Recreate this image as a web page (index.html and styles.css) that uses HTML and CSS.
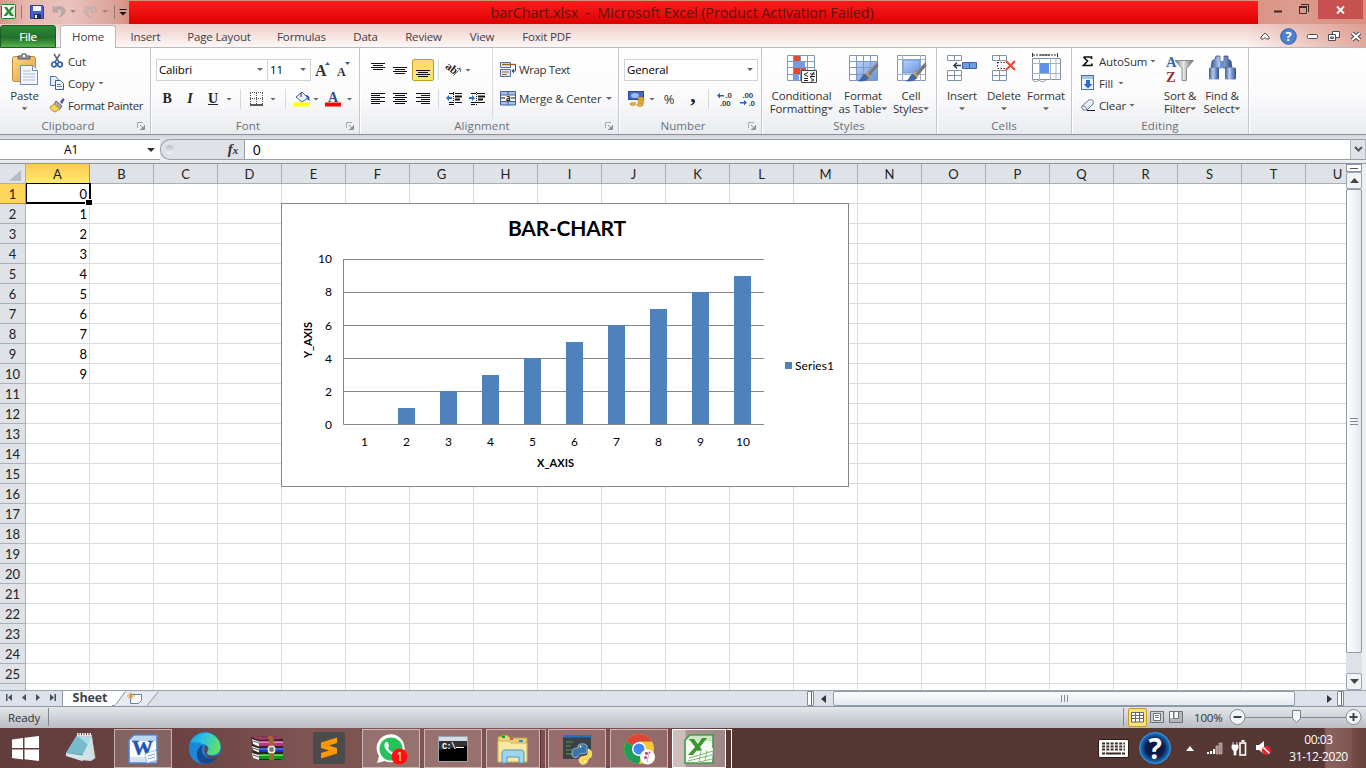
FILE: index.html
```html
<!DOCTYPE html>
<html lang="en">
<head>
<meta charset="utf-8">
<title>barChart.xlsx - Microsoft Excel</title>
<link rel="stylesheet" href="styles.css">
</head>
<body>
<svg class="defs" width="0" height="0">
  <defs>
    <linearGradient id="gBlue" x1="0" y1="0" x2="1" y2="1"><stop offset="0" stop-color="#b9d2fa"/><stop offset="1" stop-color="#6a94e2"/></linearGradient>
    <linearGradient id="gSteel" x1="0" y1="0" x2="1" y2="0"><stop offset="0" stop-color="#3c5a96"/><stop offset=".4" stop-color="#b4caf0"/><stop offset="1" stop-color="#2f4c88"/></linearGradient>
    <linearGradient id="gFunnel" x1="0" y1="0" x2="1" y2="0"><stop offset="0" stop-color="#777"/><stop offset=".45" stop-color="#e8e8e8"/><stop offset="1" stop-color="#666"/></linearGradient>
    <linearGradient id="gGold" x1="0" y1="0" x2="1" y2="1"><stop offset="0" stop-color="#fbd98c"/><stop offset="1" stop-color="#dfa03c"/></linearGradient>
    <linearGradient id="gEdge" x1="0" y1="0" x2="1" y2=".3"><stop offset="0" stop-color="#1c9be0"/><stop offset=".5" stop-color="#2fc2df"/><stop offset="1" stop-color="#5fe06a"/></linearGradient>
    <radialGradient id="gHelp"><stop offset="0" stop-color="#0b1030"/><stop offset=".6" stop-color="#0d1f52"/><stop offset="1" stop-color="#1c82d2"/></radialGradient>
    <symbol id="launch" viewBox="0 0 8 8"><path d="M.5 6V.5H6" fill="none" stroke="#a2a7b0"/><path d="M3 3l3 3M7.500 3v4.500H3" fill="none" stroke="#8b9099"/><path d="M7 4v3H4z" fill="#8b9099"/></symbol>
    <symbol id="brush" viewBox="0 0 20 20"><path d="M19 0l1 4-9 10-3-3z" fill="#77777b"/><path d="M19 0l-9 10-2 1 1 1z" fill="#c8c8cc"/><path d="M8 10l4 4-2 3-4-4z" fill="#c99655"/><path d="M6 12l4 4c-2 3-6 3-10 3 3-1 3-5 6-7z" fill="#3b6bb5" stroke="#274d8c" stroke-width=".6"/></symbol>
  </defs>
</svg>

<header class="titlebar">
  <div class="qat">
    <svg class="q-xl" width="16" height="16"><rect x=".5" y=".5" width="14" height="14" rx="1" fill="#fff" stroke="#2e7d32"/><path d="M10 1h4v13h-4z" fill="#d8ecd2"/><path d="M3 3h3l2 3 2-3h3L9.500 7.500 13 12h-3.500L7.500 9.500 5.500 12H2.500L6 7.500z" fill="#2e8b35"/></svg>
    <i class="q-sep"></i>
    <svg class="q-save" width="14" height="14"><path d="M.5.5h12l1 1v12H.5z" fill="#4662c8" stroke="#2b3f9c"/><path d="M3 1h8v5H3z" fill="#f4f6fc"/><path d="M4 9h7v5H4z" fill="#1f2c63"/><path d="M5 10h2v3H5z" fill="#fff"/></svg>
    <svg class="q-undo" width="14" height="13"><path d="M1 1v6h5.500L4 5c3-2 6-1 6 2 0 2-1 3-3 5 3-1 6-3 6-6 0-4-6-6-10-3z" fill="#b9aaaa" stroke="#a59696" stroke-width=".6"/></svg>
    <i class="dd pale"></i>
    <svg class="q-redo" width="14" height="13"><path d="M13 1v6H7.500L10 5C7 3 4 4 4 7c0 2 1 3 3 5C4 11 1 9 1 6c0-4 6-6 10-3z" fill="#cdb9b7" stroke="#b1a09f" stroke-width=".6"/></svg>
    <i class="dd pale"></i>
    <i class="q-sep q-sep2"></i>
    <svg width="8" height="8"><path d="M.5 1.500h7" stroke="#111"/><path d="M.5 4h7L4 7.500z" fill="#111"/></svg>
  </div>
  <div class="redbar"><span>barChart.xlsx&nbsp; -&nbsp; Microsoft Excel (Product Activation Failed)</span></div>
  <div class="winbtns">
    <svg width="35" height="19"><path d="M15 11.500h8" stroke="#3a2a28" stroke-width="2"/></svg>
    <svg width="24" height="19"><path d="M5.500 6.500h7v7h-7z" fill="none" stroke="#3a2a28"/><path d="M5 7h8" stroke="#3a2a28" stroke-width="2"/><path d="M7 4.500h7.500V12" fill="none" stroke="#3a2a28"/></svg>
    <div class="close"><svg width="9" height="8"><path d="M1 .5l7 7M8 .5l-7 7" stroke="#fff" stroke-width="1.800"/></svg></div>
  </div>
</header>

<nav class="tabs">
  <div class="tab file">File</div>
  <div class="tab home">Home</div>
  <div class="tab w-ins">Insert</div>
  <div class="tab w-pl">Page Layout</div>
  <div class="tab w-fo">Formulas</div>
  <div class="tab w-da">Data</div>
  <div class="tab w-re">Review</div>
  <div class="tab w-vi">View</div>
  <div class="tab w-fx">Foxit PDF</div>
  <div class="tabtools">
    <svg width="10" height="9"><path d="M1 5l4-4 4 4v2H6.500L5 5.500 3.500 7H1z" fill="#fff" stroke="#4b4b55"/></svg>
    <svg width="17" height="17"><circle cx="8.500" cy="8.500" r="7.800" fill="#4a82d4" stroke="#2c5ca8"/><text x="8.500" y="13.200" text-anchor="middle" class="i-help">?</text></svg>
    <svg width="11" height="6"><rect x=".5" y="1.500" width="10" height="4" rx="1" fill="#fff" stroke="#4b4b55"/></svg>
    <svg width="12" height="12"><path d="M4.500 1.500h7v6h-7z" fill="#fff" stroke="#4b4b55"/><path d="M.5 4.500h7v6h-7z" fill="#fff" stroke="#4b4b55"/><path d="M2.500 7h3v1.500h-3z" fill="#fff" stroke="#4b4b55"/></svg>
    <svg width="12" height="11"><path d="M2 2l8 7M10 2L2 9" stroke="#4b4b55" stroke-width="4"/><path d="M2 2l8 7M10 2L2 9" stroke="#fff" stroke-width="1.800"/></svg>
  </div>
</nav>

<section class="ribbon">
  <div class="group g-clip">
    <div class="gbody">
      <div class="big b-paste">
        <svg width="28" height="32"><rect x="2.500" y="3.500" width="23" height="25" rx="2" fill="url(#gGold)" stroke="#c58a34"/><path d="M8 6V3h3c0-3 6-3 6 0h3v3z" fill="#8d9096" stroke="#5b5e66"/><circle cx="14" cy="3" r="1.200" fill="#fff"/><path d="M10.500 12.500h12l5 5v14h-17z" fill="#f3f7fd" stroke="#7288ad"/><path d="M22.500 12.500v5h5" fill="#fff" stroke="#7288ad"/><path d="M13 18h8M13 21h12M13 24h12M13 27h12" stroke="#a9bcd8"/></svg>
        <span>Paste</span><span class="l2"><i class="dd"></i></span>
      </div>
      <div class="col3 c-clip">
        <div><svg width="16" height="14"><path d="M5 0l5 8M11 0L6 8" stroke="#5a6275" stroke-width="1.500"/><circle cx="5" cy="10.500" r="2.300" fill="none" stroke="#3464ad" stroke-width="1.700"/><circle cx="11" cy="10.500" r="2.300" fill="none" stroke="#3464ad" stroke-width="1.700"/></svg><span>Cut</span></div>
        <div><svg width="16" height="14"><path d="M1.500.5h5l3 3v6h-8z" fill="#e5eefb" stroke="#4a6fae"/><path d="M6.500 4.500h5l3 3v6h-8z" fill="#f4f8ff" stroke="#365c9e"/><path d="M8 8.500h4M8 10.500h5" stroke="#5e82c0"/></svg><span class="cp">Copy</span><i class="dd"></i></div>
        <div><svg width="16" height="14"><path d="M11 4l3-4 1.500 1.500L13 6z" fill="#5a4a9c"/><path d="M7 3l6 5-2 3-6-4z" fill="#a9a9b3" stroke="#666"/><path d="M5 6l6 5-5 3C3 13 1 11 1 9z" fill="#f4d35e" stroke="#b8922c"/></svg><span class="fp">Format Painter</span></div>
      </div>
    </div>
    <div class="glabel"><span>Clipboard</span><svg width="8" height="8"><use href="#launch"/></svg></div>
  </div>

  <div class="group g-font">
    <div class="gbody rows2">
      <div class="row r-f1">
        <div class="combo"><span>Calibri</span><i class="dd"></i></div>
        <div class="combo c2"><span>11</span><i class="dd"></i></div>
        <svg width="16" height="16"><text x="0" y="14" class="i-serif s17">A</text><path d="M10 3h5l-2.500-3z" fill="#2f5fb3"/></svg>
        <svg width="14" height="16"><text x="0" y="14" class="i-serif s12">A</text><path d="M8 0h5l-2.500 3z" fill="#2f5fb3"/></svg>
      </div>
      <div class="row r-f2">
        <b class="fmt">B</b><b class="fmt it">I</b><b class="fmt un">U</b><i class="dd"></i><i class="sep"></i>
        <svg width="14" height="14"><path d="M.5 1v11M6.500 1v11M12.500 1v11M0 .5h13M0 6.500h13" stroke="#555" stroke-dasharray="1 1"/><path d="M0 13h13" stroke="#000" stroke-width="1.300"/></svg>
        <i class="dd"></i><i class="sep"></i>
        <svg width="17" height="16"><path d="M2 6l6-5 6 6-6 4z" fill="#e9f0fa" stroke="#44608f"/><path d="M7 6V1.500" stroke="#333"/><path d="M12 4c3 0 4 3 3.500 6L13 8z" fill="#2f5fb3"/><path d="M0 11.500h16v4H0z" fill="#ff0"/></svg>
        <i class="dd"></i>
        <svg width="16" height="16"><text x="8" y="10.500" text-anchor="middle" class="i-serif s14 navy">A</text><path d="M0 11.500h16v4H0z" fill="red"/></svg>
        <i class="dd"></i>
      </div>
    </div>
    <div class="glabel"><span>Font</span><svg width="8" height="8"><use href="#launch"/></svg></div>
  </div>

  <div class="group g-align">
    <div class="gbody">
      <div class="rows2 al-left">
        <div class="row r-a1">
          <svg width="14" height="14"><path d="M0 .5h14M2 2.500h10M0 4.500h14M2 6.500h10" stroke="#111"/></svg>
          <svg width="14" height="14"><path d="M0 4.500h14M2 6.500h10M0 8.500h14M2 10.500h10" stroke="#111"/></svg>
          <div class="on"><svg width="14" height="14"><path d="M0 7.500h14M2 9.500h10M0 11.500h14M2 13.500h10" stroke="#111"/></svg></div>
          <i class="sep"></i>
          <svg width="16" height="14"><text x="-1" y="8" transform="rotate(38 4 6)" class="i-ab">ab</text><path d="M7 13l7-7M11 5.500h3.500V9" stroke="#777" fill="none"/></svg>
          <i class="dd"></i>
        </div>
        <div class="row r-a2">
          <svg width="14" height="12"><path d="M0 .5h14M0 2.500h9M0 4.500h14M0 6.500h9M0 8.500h14M0 10.500h9" stroke="#111"/></svg>
          <svg width="14" height="12"><path d="M0 .5h14M2 2.500h10M0 4.500h14M2 6.500h10M0 8.500h14M2 10.500h10" stroke="#111"/></svg>
          <svg width="14" height="12"><path d="M0 .5h14M5 2.500h9M0 4.500h14M5 6.500h9M0 8.500h14M5 10.500h9" stroke="#111"/></svg>
          <i class="sep"></i>
          <svg width="16" height="14"><path d="M3 1.500h5M9 1.500h7M3 10.500h5M9 10.500h7M3 12.500h4" stroke="#111"/><path d="M9 4.500h7M9 7.500h5" stroke="#111" stroke-width="1.800"/><path d="M7.500 0v14" stroke="#111" stroke-dasharray="1 1"/><path d="M0 6l3-3v2h3v2H3v2z" fill="#2f6bd0"/></svg>
          <svg width="16" height="14"><path d="M2 1.500h5M8 1.500h8M2 10.500h5M8 10.500h8M2 12.500h4" stroke="#111"/><path d="M9 4.500h7M9 7.500h5" stroke="#111" stroke-width="1.800"/><path d="M7.500 0v14" stroke="#111" stroke-dasharray="1 1"/><path d="M6 6L3 3v2H0v2h3v2z" fill="#2f6bd0"/></svg>
        </div>
      </div>
      <div class="rows2 al-right">
        <div class="row r-w"><svg width="17" height="15"><path d="M.5.5h10v5H.5zM.5 7.500h10v7H.5z" fill="#dfe9f8" stroke="#52709f"/><path d="M2 2.500h14" stroke="#a0602c" stroke-width="1.400"/><path d="M2 10h7M2 12.500h5" stroke="#a0602c"/><path d="M15.500 3v6h-3" stroke="#2c4c80" fill="none"/><path d="M14 6.500v5L11.500 9z" fill="#2c4c80"/></svg><span class="wt">Wrap Text</span></div>
        <div class="row r-w"><svg width="17" height="15"><path d="M.5.5h15v13.500H.5z" fill="#a9c1e6" stroke="#3f5f95"/><path d="M1 4h14v6H1z" fill="#fff"/><path d="M0 4h16M0 10.500h16M8 0v4M8 10.500V14" stroke="#3f5f95"/><path d="M1 7h4M11 7h4" stroke="#111"/><text x="8" y="9.500" text-anchor="middle" class="i-a">a</text></svg><span class="mc">Merge &amp; Center</span><i class="dd"></i></div>
      </div>
    </div>
    <div class="glabel"><span>Alignment</span><svg width="8" height="8"><use href="#launch"/></svg></div>
  </div>

  <div class="group g-num">
    <div class="gbody rows2">
      <div class="row r-n1"><div class="combo"><span>General</span><i class="dd"></i></div></div>
      <div class="row r-n2">
        <svg width="17" height="16"><rect x=".5" y=".5" width="15" height="8" fill="#3f6cc0" stroke="#284c94"/><ellipse cx="7" cy="4.500" rx="4" ry="2.500" fill="#9fbcf0"/><g fill="#f2b93b" stroke="#a87414" stroke-width=".6"><ellipse cx="13" cy="7.500" rx="3" ry="1.400"/><ellipse cx="13" cy="9.500" rx="3" ry="1.400"/><ellipse cx="13" cy="11.500" rx="3" ry="1.400"/><ellipse cx="5" cy="13" rx="3" ry="1.400"/><ellipse cx="12" cy="14" rx="3" ry="1.400"/></g></svg>
        <i class="dd"></i><span class="pct">%</span><b class="comma">,</b><i class="sep"></i>
        <svg width="16" height="14"><text x="8.500" y="6" class="i-dec">.0</text><text x="3" y="14" class="i-dec">.00</text><path d="M0 3.500L3 1v2h4v1.500H3v2z" fill="#2f5fc0"/></svg>
        <svg width="16" height="14"><text x="2.500" y="6" class="i-dec">.00</text><text x="8.500" y="14" class="i-dec">.0</text><path d="M7 10.500L4 8v2H0v1.500h4v2z" fill="#2f5fc0"/></svg>
      </div>
    </div>
    <div class="glabel"><span>Number</span><svg width="8" height="8"><use href="#launch"/></svg></div>
  </div>

  <div class="group g-sty">
    <div class="gbody">
      <div class="big b-cond">
        <svg width="32" height="32"><path d="M2.500 2.500h27v25h-27z" fill="#fff" stroke="#7f98bd"/><path d="M9 3h7v6H9zM9 15h12v6H9z" fill="#e2492f"/><path d="M9 9h11v6H9zM9 21h5v6H9z" fill="#6f9df0"/><path d="M2 8.500h28M2 14.500h28M2 21.500h28M8.500 2v26M15.500 2v26M22.500 2v26" stroke="#7f98bd"/><path d="M16.500 17.500h15v12h-15z" fill="#fff" stroke="#444"/><path d="M23 19.500l-4 2 4 2M19 25.500h4M19 27.500h4M25 21h5M25 23.500h5M29 19l-3.500 6M26 25.500l3 1.500-3 1.500" fill="none" stroke="#222"/></svg>
        <span>Conditional</span><span class="l2">Formatting<i class="dd"></i></span>
      </div>
      <div class="big b-cell">
        <svg width="32" height="32"><path d="M2.500 2.500h28v25h-28z" fill="#fff" stroke="#7f98bd"/><path d="M9 9h21v18H9z" fill="url(#gBlue)"/><path d="M2 8.500h28M2 14.500h28M2 21.500h28M9.500 2v26M16.500 2v26M23.500 2v26" stroke="#7f98bd"/><use href="#brush" x="11" y="9" width="21" height="20"/></svg>
        <span>Format</span><span class="l2">as Table<i class="dd"></i></span>
      </div>
      <div class="big b-cell">
        <svg width="32" height="32"><path d="M2.500 2.500h28v25h-28z" fill="#fff" stroke="#7f98bd"/><path d="M2 6.500h28M2 21.500h28M7.500 2v26M25.500 2v26" stroke="#9fb3d0"/><path d="M8 7h17v13H8z" fill="url(#gBlue)" stroke="#6a94d8"/><use href="#brush" x="11" y="9" width="21" height="20"/></svg>
        <span>Cell</span><span class="l2">Styles<i class="dd"></i></span>
      </div>
    </div>
    <div class="glabel nol"><span>Styles</span></div>
  </div>

  <div class="group g-cells">
    <div class="gbody">
      <div class="big b-c">
        <svg width="32" height="32"><path d="M1.500 2.500h14v5h-14zM1.500 17.500h14v10h-14zM1.500 22.500h14M8.500 2.500v5M8.500 17.500v10" fill="#fff" stroke="#7f91ab"/><path d="M16.500 9.500h14v6h-14z" fill="#6d9be8" stroke="#3e62a0"/><path d="M23.500 9v7" stroke="#3e62a0"/><path d="M8 12.500h7M11 9.500l-3 3 3 3" stroke="#333e55" stroke-width="1.500" fill="none"/></svg>
        <span>Insert</span><span class="l2"><i class="dd"></i></span>
      </div>
      <div class="big b-c">
        <svg width="32" height="32"><path d="M4.500 2.500h14v5h-14zM4.500 17.500h14v10h-14zM4.500 22.500h14M11.500 2.500v5M11.500 17.500v10" fill="#fff" stroke="#7f91ab"/><path d="M9.500 9.500h8M9.500 15.500h8M9.500 9v6" stroke="#333" stroke-dasharray="1.500 1.500"/><path d="M18 8l9 9M27 8l-9 9" stroke="#f0442c" stroke-width="2"/></svg>
        <span>Delete</span><span class="l2"><i class="dd"></i></span>
      </div>
      <div class="big b-c">
        <svg width="32" height="32"><path d="M2.500 5.500h28v21h-28z" fill="#fff" stroke="#7f91ab"/><path d="M2 10.500h28M2 20.500h28M9.500 5v22M20.500 5v22M26 5v22" stroke="#a5b3c9"/><path d="M10 10h9v10h-9z" fill="#5f92ea"/><path d="M2.500 0v4M27.500 0v4M10 2h10" stroke="#333" fill="none"/><path d="M3 2h24" stroke="#333" stroke-dasharray="2 1"/><path d="M3 27c0 2 5 2 6 0 1 2 6 2 7 0" fill="#fff" stroke="#7f91ab"/></svg>
        <span>Format</span><span class="l2"><i class="dd"></i></span>
      </div>
    </div>
    <div class="glabel nol"><span>Cells</span></div>
  </div>

  <div class="group g-edit">
    <div class="gbody">
      <div class="col3 c-edit">
        <div><svg width="14" height="14"><path d="M2.500 3h8v2M2.500 3l4 4-4 4.500h8.300v-2" fill="none" stroke="#111" stroke-width="1.700"/></svg><span class="as">AutoSum</span><i class="dd"></i></div>
        <div><svg width="14" height="16"><rect x=".5" y=".5" width="12" height="14" fill="#eef4fd" stroke="#4a6fae"/><path d="M1 1h11v3H1z" fill="#a9c3ec"/><path d="M5 5h4v4h2.500L7 13.500 2.500 9H5z" fill="#2f6bd8"/></svg><span class="fi">Fill</span><i class="dd"></i></div>
        <div><svg width="14" height="14"><path d="M1 8l7-6c4-1 5 1 4 4l-6 6H3c-2-1-3-3-2-4z" fill="#e8f0fc" stroke="#6a7ea3"/><path d="M1 8c3 0 5 1 5 4" fill="none" stroke="#6a7ea3"/><path d="M6 12.500h8" stroke="#111"/></svg><span class="cl">Clear</span><i class="dd"></i></div>
      </div>
      <div class="big b-c">
        <svg width="32" height="32"><path d="M11 7.500h18.500l-7 8v12h-4.500v-12z" fill="url(#gFunnel)" stroke="#777" stroke-width=".8"/><text x="2" y="14" class="i-az blueA">A</text><text x="2" y="29" class="i-az redZ">Z</text></svg>
        <span>Sort &amp;</span><span class="l2">Filter<i class="dd"></i></span>
      </div>
      <div class="big b-c">
        <svg width="32" height="32"><path d="M10 3h4v4l1 2v6H5l1-7 3-2zM18 3h4v3l3 2 1 7H17V9l1-2z" fill="url(#gSteel)" stroke="#2d4a80" stroke-width=".7"/><path d="M14 8h4v7h-4z" fill="#6d8fcc"/><rect x="3" y="14.500" width="10" height="12" rx="1.500" fill="url(#gSteel)"/><rect x="19" y="14.500" width="11" height="12" rx="1.500" fill="url(#gSteel)"/></svg>
        <span>Find &amp;</span><span class="l2">Select<i class="dd"></i></span>
      </div>
    </div>
    <div class="glabel nol"><span>Editing</span></div>
  </div>
</section>

<section class="formula">
  <div class="namebox"><span>A1</span><svg width="8" height="4"><path d="M0 0h8L4 4z" fill="#333"/></svg></div>
  <div class="fxpart"><i class="knob"></i><em>f<small>x</small></em></div>
  <div class="fval">0</div>
  <div class="fexp"><svg width="9" height="7"><path d="M1 1l3.500 3.500L8 1" fill="none" stroke="#555" stroke-width="2"/></svg></div>
</section>

<main class="sheet">
  <div class="rowheads">
    <div class="corner"><svg width="12" height="11"><path d="M12 0v11H0z" fill="#b6bcc4"/></svg></div>
    <span class="sel">1</span><span>2</span><span>3</span><span>4</span><span>5</span><span>6</span><span>7</span><span>8</span><span>9</span><span>10</span><span>11</span><span>12</span><span>13</span><span>14</span><span>15</span><span>16</span><span>17</span><span>18</span><span>19</span><span>20</span><span>21</span><span>22</span><span>23</span><span>24</span><span>25</span><span></span>
  </div>
  <div class="main">
    <div class="colheads"><span class="sel">A</span><span>B</span><span>C</span><span>D</span><span>E</span><span>F</span><span>G</span><span>H</span><span>I</span><span>J</span><span>K</span><span>L</span><span>M</span><span>N</span><span>O</span><span>P</span><span>Q</span><span>R</span><span>S</span><span>T</span><span>U</span></div>
    <div class="cells">
      <div class="colA"><span>0</span><span>1</span><span>2</span><span>3</span><span>4</span><span>5</span><span>6</span><span>7</span><span>8</span><span>9</span></div>
      <div class="cursor"></div>
      <svg class="chart" width="568" height="284">
        <rect x=".5" y=".5" width="567" height="283" fill="#fff" stroke="#868686"/>
        <text x="227" y="33" textLength="118" class="ct">BAR-CHART</text>
        <path d="M62 56.500h421M62 89.500h421M62 122.500h421M62 155.500h421M62 188.500h421" stroke="#868686"/>
        <g fill="#4f81bd"><path d="M117 205h17v16h-17zM159 188h17v33h-17zM201 172h17v49h-17zM243 155h17v66h-17zM285 139h17v82h-17zM327 122h17v99h-17zM369 106h17v115h-17zM411 89h17v132h-17zM453 73h17v148h-17z"/><path d="M504 159h7v7h-7z"/></g>
        <path d="M62.500 56v165.500H483" fill="none" stroke="#868686"/>
        <g class="cl12" text-anchor="end"><text x="51" y="60">10</text><text x="51" y="93">8</text><text x="51" y="127">6</text><text x="51" y="160">4</text><text x="51" y="193">2</text><text x="51" y="226">0</text></g>
        <g class="cl12" text-anchor="middle"><text x="83.500" y="243">1</text><text x="125.500" y="243">2</text><text x="167.500" y="243">3</text><text x="209.500" y="243">4</text><text x="251.500" y="243">5</text><text x="293.500" y="243">6</text><text x="335.500" y="243">7</text><text x="377.500" y="243">8</text><text x="419.500" y="243">9</text><text x="462" y="243">10</text></g>
        <text x="514" y="167" textLength="39" class="cl12">Series1</text>
        <text x="256" y="264" textLength="37" class="ca">X_AXIS</text>
        <text x="0" y="0" textLength="36" transform="translate(30.500 155) rotate(-90)" class="ca">Y_AXIS</text>
      </svg>
    </div>
  </div>
  <div class="vscroll">
    <div class="vsplit"><i></i></div>
    <div class="vbtn"><svg width="9" height="5"><path d="M4.500 0L9 5H0z" fill="#444"/></svg></div>
    <div class="vthumb"><i></i><i></i><i></i></div>
    <div class="vtrack"></div>
    <div class="vbtn"><svg width="9" height="5"><path d="M0 0h9L4.500 5z" fill="#444"/></svg></div>
  </div>
</main>

<div class="tabstrip">
  <svg class="nav" width="63" height="15"><g fill="#4a4f57"><path d="M6 3h1.500v7H6zM12 3v7L8 6.500zM26 3v7l-4-3.500zM36 3v7l4-3.500zM50 3v7l4-3.500zM54.500 3H56v7h-1.500z"/></g><path d="M62.500 0v16" stroke="#8c97a8"/></svg>
  <div class="stab">Sheet</div>
  <svg class="newtab" width="48" height="15"><path d="M-5 0H8L-2 14h-3z" fill="#fff"/><path d="M-1.500 14L9.500 .5H41.500L30 14.500z" fill="#e8ebf0"/><path d="M-5 14.500h3L8.500.5M30 14.500L41.500 .5" fill="none" stroke="#8c97a8"/><path d="M13.500 3.500h11v6l-3 3h-8z" fill="#fff" stroke="#5d7fba"/><path d="M14 1v8M10 5h8M11.500 2.500l5 5M16.500 2.500l-5 5" stroke="#d99a35"/></svg>
  <div class="grow"></div>
  <div class="hsplit"></div>
  <div class="hl"><svg width="5" height="8"><path d="M5 0v8L0 4z" fill="#333"/></svg></div>
  <div class="hthumb"><i></i><i></i><i></i></div>
  <div class="hr"><svg width="5" height="8"><path d="M0 0v8l5-4z" fill="#333"/></svg></div>
  <div class="hsplit"></div>
  <div class="hend"></div>
</div>

<footer class="status">
  <span class="ready">Ready</span><i class="ssep"></i>
  <div class="grow"></div>
  <i class="ssep"></i>
  <div class="vw on2"><svg width="13" height="11"><path d="M.5.500h12v9.500H.5zM.5 3.500h12M.5 6.500h12M4.500.5V10M8.500.5V10" fill="#fff" stroke="#666"/></svg></div>
  <div class="vw"><svg width="14" height="12"><path d="M.5.5h13v11H.5z" fill="#c9cdd1" stroke="#6f7378"/><path d="M3.500 2.500h7v7h-7z" fill="#fff" stroke="#6f7378"/><path d="M5 4.500h4M5 6.500h4" stroke="#777"/></svg></div>
  <div class="vw"><svg width="14" height="12"><path d="M.5.5h13v11H.5z" fill="#b5b9be" stroke="#6f7378"/><path d="M1 1h3v6H1zM6 1h3v6H6z" fill="#fff"/><path d="M4.500 0v7.500H9.500V0" fill="none" stroke="#6f7378"/></svg></div>
  <span class="zoom">100%</span>
  <svg class="slider" width="137" height="20"><path d="M16 10.500h104" stroke="#7d858f"/><circle cx="8.500" cy="10" r="7.500" fill="#f4f5f6" stroke="#858b93"/><path d="M4.500 10h8" stroke="#444" stroke-width="2"/><path d="M63.500 3.500h8v8l-4 4-4-4z" fill="#f6f7f8" stroke="#777e88"/><circle cx="124.500" cy="10" r="7.500" fill="#f4f5f6" stroke="#858b93"/><path d="M120.500 10h8M124.500 6v8" stroke="#444" stroke-width="2"/></svg>
</footer>

<div class="taskbar">
  <div class="start"><svg width="27" height="25"><path d="M0 3.500l11-1.500v10H0zM12.500 1.800L27 0v12H12.500zM0 13.500h11v10L0 22zM12.500 13.500H27V25l-14.500-1.800z" fill="#fff"/></svg></div>
  <div class="slot"><svg width="32" height="32"><path d="M26 4l5 22-3 2-5-3z" fill="#8f7a3a"/><path d="M12 3h15l-5 20L1 21z" fill="#a8dce6"/><path d="M12 3l-6 10-5 8c6 1 9 2 12 3l9-1 2-9z" fill="#4fa3b8" opacity=".55"/><path d="M27 4l3 22-4 3-11-1z" fill="#cfe0e6"/><path d="M1 21l14 2 9 1-7 5-16-5z" fill="#d5e6ea"/><path d="M12 3h15v2H12z" fill="#c3c9cc"/><path d="M12 2.500h15" stroke="#eef2f3" stroke-width="3" stroke-dasharray="1.500 1"/></svg></div>
  <div class="slot open"><svg width="32" height="32"><path d="M7 2h23v28H2V7z" fill="#fff" stroke="#4f82cb" stroke-width="1.600"/><path d="M4 7l4-4h21v5H4z" fill="#bcd5f3"/><path d="M3 24h26v5H3z" fill="#d3e3f7"/><text x="15.500" y="22" text-anchor="middle" textLength="21" lengthAdjust="spacingAndGlyphs" class="i-word">W</text><path d="M18 21l11-4 1 10-10 3z" fill="#fff" stroke="#9dbbe3"/><path d="M21 23l7-2M21 26l7-2" stroke="#7ba1d6"/></svg></div>
  <div class="slot"><svg width="32" height="32"><circle cx="16" cy="16" r="16" fill="#1a7fd6"/><path d="M1 11C4 1 22-5 30 9c4 8 0 14-8 14-4 0-5-2-3-4 2-3-1-7-6-7-5-1-9-2-12-1z" fill="url(#gEdge)"/><path d="M0 17c0-6 8-8 13-5-5 5-5 14 2 20C6 32 0 25 0 17z" fill="#1c87da"/><path d="M14 13c-5 9 5 17 15 12-4 6-11 8-17 6C5 25 8 15 14 13z" fill="#16498f"/><path d="M17 13c4 3 0 6 1 9 3 3 8 3 13 0-1 2-2 3-3 4-5 2-11-1-12-5-1-3-1-6 1-8z" fill="#653f3f"/></svg></div>
  <div class="slot"><svg width="32" height="32"><path d="M0 5l24-1 8 3v20l-4 1H8l-6-2z" fill="#33211f"/><path d="M0 5l24-1 8 3-24 1z" fill="#9b3a68"/><path d="M1 7l7 2.500v5L2 12zM1 14l7 2.500v4L2 18zM1 21l7 2v5l-6-2z" fill="#f4f2f2"/><path d="M2 9l6 2M2 16l6 2M2 23l6 2" stroke="#666"/><path d="M8 9h24v5H8z" fill="#b03a7c"/><path d="M8 9.500h24v1.500H8z" fill="#e08abb"/><path d="M8 16h24v4H8z" fill="#1634d0"/><path d="M8 16.500h24v1H8z" fill="#6c8cf4"/><path d="M8 22h24v5H8z" fill="#0c9a1c"/><path d="M8 22.500h24V24H8z" fill="#5be05e"/><path d="M17 4l4 0 2 5v19h-5V9z" fill="#a5672a"/><rect x="17.500" y="14.500" width="6" height="6" rx="2" fill="#777" stroke="#f0ead2" stroke-width="1.700"/></svg></div>
  <div class="slot"><svg width="32" height="32"><rect width="32" height="32" rx="2" fill="#4b4b4b"/><path d="M8 10.500L24 5.500v5.500L16 13.500l8 2.500v5.500L8 26.500V21l8-2.500L8 16z" fill="#ff9800"/></svg></div>
  <div class="slot open"><svg width="32" height="32"><path d="M2 30l2-7a14 14 0 1 1 6 5z" fill="#fff"/><circle cx="16" cy="16" r="11.500" fill="#25c35c"/><path d="M11 9c2-1 3 4 3 4l-1 2c1 2 3 4 5 4l2-2 4 2c0 4-5 4-8 2-5-3-9-9-5-12z" fill="#fff"/><circle cx="24.500" cy="23.500" r="8" fill="#f11"/><text x="24.500" y="28" text-anchor="middle" class="i-one">1</text></svg></div>
  <div class="slot open"><svg width="30" height="26"><rect x=".5" y=".5" width="29" height="25" fill="#000" stroke="#9aa3ab"/><path d="M1 1h28v4H1z" fill="#d5dde4"/><path d="M1 5h28v5L1 14z" fill="#333"/><text x="4" y="12.500" class="i-cmd">C:\</text><path d="M18 11.500h8" stroke="#fff"/></svg></div>
  <div class="slot open stack"><svg width="32" height="30"><path d="M1 3l9-2 3 3h17v22H1z" fill="#e9d27f" stroke="#bd9c3f"/><path d="M5 2h3v2H5z" fill="#0c9a1c"/><path d="M13 4h3v2h-3z" fill="#e0512c"/><path d="M22 6h4v2h-4z" fill="#2c88d8"/><path d="M1 7h11l2 2h16v19H1z" fill="#f8e8a2" stroke="#ceb057"/><path d="M5 29V19c0-2 1-3 3-3h16c2 0 3 1 3 3v10h-5v-6H10v6z" fill="#9fd4ee" stroke="#4e9ac5"/></svg></div>
  <div class="slot open"><svg width="32" height="32"><path d="M2 2h28v24H2z" fill="#3c4145"/><path d="M2 2h28v2.500H2z" fill="#1c72c4"/><path d="M5 9h7M5 13h5M5 17h6M5 21h9" stroke="#4aa04a"/><path d="M17 13c0-3 9-3 9 0v6c0 3-9 0-9 5-5 2-6-1-6-4 0-4 2-5 6-5z" fill="#3a76ab" stroke="#fff" stroke-width=".5"/><path d="M27 16c5 0 5 10 0 10 0 7-9 7-9 1 0-6 9-2 9-7z" fill="#ffd749" stroke="#fff" stroke-width=".5"/><circle cx="19.500" cy="13.500" r="1" fill="#fff"/><circle cx="24" cy="28.500" r="1" fill="#fff"/></svg></div>
  <div class="slot open"><svg width="32" height="32"><circle cx="16" cy="16" r="15" fill="#f9c935"/><path d="M16 16L3 8.500A15 15 0 0 1 29 8.500H16z" fill="#dc4437"/><path d="M16 16L3 8.500A15 15 0 0 0 15.500 31l6-11z" fill="#1f9d58"/><circle cx="16" cy="16" r="7" fill="#fff"/><circle cx="16" cy="16" r="5.500" fill="#4285f4"/><circle cx="24.500" cy="24" r="7.500" fill="#fff"/><circle cx="23.500" cy="20.500" r="1.400" fill="#a0305a"/><circle cx="26.500" cy="19.500" r="1" fill="#c04a7c"/><circle cx="22.500" cy="24.500" r="1.600" fill="#c04a7c"/><path d="M26 20l-2 9" stroke="#d9a0b8"/></svg></div>
  <div class="slot open stack act"><svg width="32" height="32"><path d="M7 2h23v28H2V7z" fill="#f5fbf3" stroke="#3f9a45" stroke-width="1.600"/><path d="M4 7l4-4h21v5H4z" fill="#c9e8c2"/><path d="M6 6h5l4 5 4-6h5l-7 9 6 9h-5l-4-6-4 5H5l7-8z" fill="#3b9632"/><path d="M15 18l15-3-1 12-15 3z" fill="#fff"/><path d="M6 25l24-7M5 28l24-6M12 30l17-4M18 18l-2 11M24 17l-2 11" stroke="#7db672"/></svg></div>
  <div class="grow"></div>
  <svg class="kb" width="31" height="19"><rect x=".5" y=".5" width="30" height="18" rx="1.500" fill="#fff" stroke="#2b1a18"/><path d="M4 4.500h23M4 7.500h23M4 10.500h23" stroke="#3b2b29" stroke-width="2" stroke-dasharray="3 1.300"/><path d="M8 14.500h15M4 14.500h3M24 14.500h3" stroke="#3b2b29" stroke-width="2"/></svg>
  <svg class="qh" width="32" height="32"><circle cx="16" cy="16" r="15.500" fill="url(#gHelp)" stroke="#2f9be8"/><text x="16" y="26.500" text-anchor="middle" class="i-big">?</text></svg>
  <svg class="up" width="8" height="5"><path d="M4 0l4 5H0z" fill="#fff"/></svg>
  <svg class="sig" width="16" height="13"><path d="M0 10h2v2H0zM3 9h2v3H3zM6 7h2v5H6z" fill="#fff"/><path d="M9 4h2v8H9zM12 1h3v11h-3z" fill="#9c8886" stroke="#d8cdcb" stroke-width=".6"/></svg>
  <svg class="bat" width="15" height="16"><path d="M1 2v3M5 2v3M0 5h6v3c0 2-2 2-2 3v4H2v-4c0-1-2-1-2-3z" stroke="#fff" fill="#fff" stroke-width=".8"/><rect x="8" y="3" width="5.500" height="12" fill="none" stroke="#fff" stroke-width="1.600"/><path d="M9.500 1h3" stroke="#fff" stroke-width="2"/></svg>
  <svg class="vol" width="16" height="16"><path d="M0 5h3l5-4v13l-5-4H0z" fill="#fff"/><circle cx="10.500" cy="10.500" r="4.500" fill="#e8202a"/><path d="M7.500 7.500l6 6" stroke="#fff" stroke-width="1.500"/></svg>
  <div class="clock"><span>00:03</span><span>31-12-2020</span></div>
</div>
</body>
</html>
```
FILE: styles.css
```css
* { box-sizing: border-box; }
body { margin: 0; width: 1366px; height: 768px; overflow: hidden; display: flex; flex-direction: column; font-family: "Open Sans", "Noto Sans", sans-serif; font-size: 11.5px; letter-spacing: -0.15px; color: #333; background: #dce0e8; }
body > * { flex: none; }
svg { display: block; flex: none; overflow: visible; }
.defs { position: absolute; }
.grow { flex: 1; }
span, div { white-space: nowrap; }

/* title bar */
.titlebar { height: 24px; display: flex; background: linear-gradient(90deg, #d99386 0, #e6b7af 25px, #e9c3bd 70px, #dda69b 110px, #d88f80 130px, #d88f80 1240px, #dc9c8f 1290px, #d99080 1366px); }
.qat { width: 129px; display: flex; align-items: center; padding-left: 1px; padding-bottom: 1px; }
.q-sep { width: 1px; height: 14px; background: #8d7a79; margin-left: 4px; }
.q-save { margin-left: 8px; }
.q-undo { margin-left: 8px; }
.q-undo + .dd { margin-left: 4px; }
.q-redo { margin-left: 7px; }
.q-redo + .dd { margin-left: 5px; }
.q-sep2 { margin-left: 6px; margin-right: 4px; }
.redbar { width: 1129px; height: 23px; margin-top: 1px; background: linear-gradient(#fd1c1c, #ee0f0f 50%, #dc0000); color: #61150f; font-size: 14.5px; letter-spacing: -0.13px; text-align: center; line-height: 23px; padding-right: 23px; }
.winbtns { display: flex; padding-left: 1px; }
.close { width: 45px; height: 19px; background: #c75050; display: flex; align-items: center; justify-content: center; }

/* tabs */
.tabs { height: 24px; display: flex; padding-top: 1px; background: linear-gradient(90deg, rgba(216,143,128,0) 0, rgba(216,143,128,0) 1245px, rgba(216,143,128,.75) 1366px), linear-gradient(#f0cec8, #fdf7f6); border-bottom: 1px solid #b5babf; }
.tab { text-align: center; line-height: 23px; height: 23px; color: #40404a; }
.file { width: 56px; background: linear-gradient(#2c8a37, #22702b 55%, #55b24a); border: 1px solid #1b5e22; border-radius: 3px 3px 0 0; color: #fff; line-height: 22px; -webkit-text-stroke: .2px #fff; }
.home { width: 56px; height: 24px; margin-left: 4px; margin-right: 3px; background: #fff; border: 1px solid #b5babf; border-bottom: 0; border-radius: 3px 3px 0 0; line-height: 21px; }
.w-ins { width: 53px; } .w-pl { width: 94px; } .w-fo { width: 71px; } .w-da { width: 57px; } .w-re { width: 59px; } .w-vi { width: 58px; } .w-fx { width: 71px; }
.tabtools { flex: 1; display: flex; justify-content: flex-end; align-items: center; gap: 10px; padding-right: 4px; padding-bottom: 0; }

/* ribbon */
.ribbon { height: 87px; display: flex; background: linear-gradient(#fff, #fbfbfc 55%, #e9ebee); border-bottom: 1px solid #8b9097; }
.group { display: flex; flex-direction: column; border-right: 1px solid #c3c8cf; box-shadow: 1px 0 #fff; }
.g-clip { width: 151px; } .g-font { width: 209px; } .g-align { width: 259px; } .g-num { width: 143px; } .g-sty { width: 175px; } .g-cells { width: 135px; } .g-edit { width: 177px; }
.gbody { height: 70px; display: flex; }
.glabel { height: 16px; display: flex; align-items: center; padding: 0 5px 1px 5px; color: #6a7080; }
.glabel span { flex: 1; text-align: center; padding-right: 6px; letter-spacing: .1px; }
.glabel.nol span { padding: 0; }
.dd { width: 6px; height: 3px; background: #666; clip-path: polygon(0 0, 100% 0, 50% 100%); flex: none; }
.dd.pale { background: #9c8583; }
.big { display: flex; flex-direction: column; align-items: center; padding-top: 5px; }
.big > svg { margin-bottom: 5px; height: 32px; margin-right: 1px; }
.big > span { height: 12.5px; line-height: 12.5px; }
.big .l2 { display: flex; align-items: center; }
.l2 .dd { margin-left: 3px; }
.l2 .dd:only-child { margin-left: 0; }
.b-paste { width: 49px; }
.b-cond { width: 75px; margin-left: 2px; }
.b-cell { width: 48px; }
.b-c { width: 42px; }
.g-cells .gbody { padding-left: 4px; }
.col3 { padding-top: 2px; display: flex; flex-direction: column; }
.col3 > div { height: 22px; display: flex; align-items: center; }
.c-clip svg { margin-right: 3px; }
.cp { width: 30px; }
.fp { letter-spacing: -.36px; }
.wt { letter-spacing: -.4px; }
.c-edit { width: 87px; padding-left: 9px; }
.c-edit svg { margin-right: 4px; }
.as { width: 51px; } .fi { width: 19px; } .cl { width: 30px; }
.rows2 { display: flex; flex-direction: column; padding-top: 11px; gap: 7px; }
.gbody .rows2 { flex: none; }
.row { height: 22px; display: grid; align-items: center; justify-items: center; justify-content: start; }
.g-font .row, .g-num .row { padding-left: 5px; }
.r-f1 { grid-template-columns: 112px 43px 24px 18px; }
.r-f2 { grid-template-columns: 22px 24px 22px 10px 12px 22px 10px 15px 18px 10px 24px 9px; }
.al-left { width: 132px; padding-left: 6px; }
.r-a1 { grid-template-columns: 23px 22px 24px 7px 23px 6px; }
.r-a2 { grid-template-columns: 23px 22px 24px 7px 24px 22px; }
.al-right { padding-left: 7px; border-left: 1px solid #d8dbe0; }
.r-w { display: flex; padding-bottom: 1px; }
.r-w svg { margin-right: 2px; }
.mc { width: 87px; }
.r-n1 { grid-template-columns: 134px; }
.r-n2 { grid-template-columns: 24px 8px 26px 22px 9px 24px 21px; }
.combo { width: 100%; height: 22px; background: #fff; border: 1px solid #cfd3d8; display: flex; align-items: center; justify-content: space-between; padding: 0 4px 1px 2px; color: #000; }
.c2 { border-left: 0; }
.sep { width: 1px; height: 20px; background: #d5d8dd; }
.on { width: 22px; height: 22px; border: 1px solid #c29b29; border-radius: 2px; background: linear-gradient(#ffd86c, #fee27e); display: flex; align-items: center; justify-content: center; }
.fmt { font: bold 14px "Liberation Serif", serif; color: #222; }
.it { font-style: italic; } .un { text-decoration: underline; }
.pct { font-size: 13px; }
.comma { font: bold 22px/10px "Liberation Serif", serif; padding-bottom: 8px; color: #222; }

/* text inside icons */
.i-serif { font-family: "Liberation Serif", serif; font-weight: bold; fill: #333; letter-spacing: 0; }
.s17 { font-size: 16px; } .s12 { font-size: 12px; } .s14 { font-size: 14px; }
.navy { fill: #2f4f8f; }
.i-az { font: bold 14.5px "Liberation Serif", serif; letter-spacing: 0; }
.blueA { fill: #3564b5; } .redZ { fill: #9b3030; }
.i-help { font: bold 13px "Open Sans", sans-serif; fill: #fff; }
.i-ab { font: bold 11.5px "Liberation Serif", serif; fill: #222; }
.i-a { font: bold 8px "Open Sans", sans-serif; fill: #111; }
.i-dec { font: bold 8px "Liberation Sans", sans-serif; fill: #444; letter-spacing: -.2px; }
.i-word { font: bold 21px "Liberation Serif", serif; fill: #1c55b4; letter-spacing: 0; stroke: #1c55b4; stroke-width: .5px; }
.i-one { font: 12px "Open Sans", sans-serif; fill: #fff; }
.i-cmd { font: bold 8.5px "Liberation Mono", monospace; fill: #fff; letter-spacing: -.6px; }
.i-big { font: bold 28px "Open Sans", sans-serif; fill: #fff; }

/* formula bar */
.formula { height: 29px; padding: 4px 0 4px; display: flex; background: linear-gradient(#d0d4db, #dfe2e7 4px, #eceef1 25px, #e5e7eb); border-bottom: 1px solid #90959c; }
.formula > div { height: 21px; border-top: 1px solid #989da5; border-bottom: 1px solid #989da5; }
.namebox { width: 160px; background: #fff; display: flex; align-items: center; color: #000; font-size: 12px; padding-left: 64px; justify-content: space-between; padding-right: 5px; }
.fxpart { width: 84px; background: #dee1e6; border-left: 1px solid #989da5; border-radius: 10px 0 0 10px; display: flex; align-items: center; justify-content: space-between; padding: 0 6px 0 4px; }
.knob { width: 9px; height: 9px; border-radius: 50%; background: linear-gradient(#b9bdc3, #f3f4f6); }
.fxpart em { font: italic bold 15px/18px "Liberation Serif", serif; color: #333; }
.fxpart small { font-size: 11px; }
.fval { flex: 1; background: #fff; border-left: 1px solid #989da5; font: 13px/20px Lato, sans-serif; color: #000; padding-left: 8px; }
.fexp { width: 16px; border: 1px solid #b5babf; background: #dee1e6; display: flex; align-items: center; justify-content: center; }

/* worksheet */
.sheet { height: 526px; display: flex; font: 13px Lato, sans-serif; letter-spacing: 0; overflow: hidden; }
.rowheads { width: 26px; display: flex; flex-direction: column; background: #dfe2e7; color: #222; }
.corner { height: 20px; flex: none; border-right: 1px solid #a9afb7; border-bottom: 1px solid #a9afb7; padding: 6px 0 0 9px; }
.rowheads span { height: 20px; flex: none; border-bottom: 1px solid #a9afb7; border-right: 1px solid #a9afb7; text-align: center; line-height: 20px; }
.rowheads .sel { background: #ffd65c; border-color: #c08a2e; }
.main { width: 1320px; overflow: hidden; }
.colheads { height: 20px; display: flex; background: #dfe2e7; color: #222; }
.colheads span { width: 64px; flex: none; text-align: center; line-height: 20px; border-right: 1px solid #a9afb7; border-bottom: 1px solid #a9afb7; }
.colheads .sel { background: linear-gradient(#fdca55, #ffe96a); border-color: #c08a2e; }
.cells { height: 506px; position: relative; background: linear-gradient(90deg, transparent 63px, #d9dadc 63px) 0 0 / 64px 20px, linear-gradient(transparent 19px, #d9dadc 19px) 0 0 / 64px 20px, #fff; }
.colA { width: 61px; display: flex; flex-direction: column; color: #000; }
.colA span { height: 20px; line-height: 21px; text-align: right; }
.cursor { position: absolute; left: 0; top: -1px; width: 65px; height: 21px; border: 1px solid #000; border-right-width: 2px; border-bottom-width: 2px; }
.cursor::after { content: ""; position: absolute; right: -3px; bottom: -3px; width: 6px; height: 5px; background: #000; border-left: 1px solid #fff; border-top: 1px solid #fff; }
.chart { position: absolute; left: 255px; top: 19px; }
.ct { font: bold 21px Lato, sans-serif; }
.cl12 { font: 12px Lato, sans-serif; }
.ca { font: bold 11px Lato, sans-serif; }
.vscroll { width: 20px; background: #dde1e8; border-right: 4px solid #eceef2; display: flex; flex-direction: column; }
.vsplit { height: 8px; border: 1px solid #8b95a5; background: #fff; padding: 3px 3px 0; }
.vsplit i { display: block; height: 1px; background: #555; }
.vbtn { height: 17px; border: 1px solid #9aa5b5; border-radius: 2px; background: #f1f3f6; display: flex; align-items: center; justify-content: center; }
.vthumb { height: 464px; border: 1px solid #8f9aab; border-radius: 2px; background: linear-gradient(90deg, #fff, #e4e8ee); display: flex; flex-direction: column; align-items: center; justify-content: center; gap: 2px; }
.vthumb i { width: 8px; height: 1px; background: #828a97; }
.vtrack { flex: 1; }

/* sheet tabs */
.tabstrip { height: 17px; display: flex; align-items: stretch; background: #dde1e9; border-top: 1px solid #9aa2ad; border-bottom: 1px solid #8b95a5; }
.stab { width: 54px; background: #fff; font: bold 12.5px/14px "Open Sans", sans-serif; text-align: center; color: #3d434c; letter-spacing: -.1px; }
.hsplit { width: 7px; border: 1px solid #7f8999; border-radius: 1px; background: linear-gradient(90deg, #fff 3px, #666 3px, #666 4px, #fff 4px); }
.hl { width: 19px; display: flex; align-items: center; justify-content: center; }
.hthumb { width: 462px; border: 1px solid #8f9aab; border-radius: 2px; background: linear-gradient(#fdfdfe, #e4e8ee); display: flex; align-items: center; justify-content: center; gap: 2px; }
.hthumb i { width: 1px; height: 7px; background: #828a97; }
.hr { width: 42px; display: flex; align-items: center; justify-content: flex-end; padding-right: 5px; }
.hend { width: 22px; }

/* status bar */
.status { height: 21px; display: flex; align-items: center; padding-bottom: 1px; background: linear-gradient(#e3e6e9, #cfd2d6 50%, #b9bdc2); color: #333; }
.ready { width: 48px; padding-left: 8px; }
.ssep { width: 1px; height: 18px; background: #82878d; }
.status .ssep + .vw { margin-left: 4px; }
.vw { width: 19px; height: 19px; display: flex; align-items: center; justify-content: center; }
.on2 { border: 1px solid #c29b29; border-radius: 2px; background: #ffe07a; }
.zoom { margin-left: 9px; width: 35px; }

/* taskbar */
.taskbar { height: 40px; display: flex; align-items: center; background: linear-gradient(90deg, #613d3c, #6b4342 180px, #7c5552 300px, #80534f 440px, #7c4b4b 660px, #553733 735px, #553733 1324px, #8b6460 1326px, #7e5551 1351px, #704b47 1353px, #67413c); }
.start { width: 50px; flex: none; padding-left: 12px; }
.slot { width: 62px; flex: none; height: 40px; display: flex; align-items: center; justify-content: center; position: relative; }
.open { width: 58px; height: 39px; margin: 1px 2px 0; border: 1px solid rgba(255,255,255,.5); background: rgba(255,255,255,.18); }
.stack { width: 54px; margin-right: 6px; }
.stack::after { content: ""; position: absolute; left: 53px; top: -1px; width: 4px; height: 39px; border: 1px solid rgba(255,255,255,.5); border-left-color: rgba(60,30,30,.5); }
.act { background: linear-gradient(90deg, rgba(255,255,255,.65) 12px, rgba(255,255,255,.42) 13px, rgba(255,255,255,.4)); border-color: #fff; }
.act::after { border-color: #fff; border-left-color: #553733; }
.kb { margin-right: 10px; }
.qh { margin-right: 15px; }
.up { margin-right: 13px; }
.sig { margin-right: 9px; }
.bat { margin-right: 9px; }
.vol { margin-right: 9px; }
.clock { width: 85px; display: flex; flex-direction: column; align-items: center; color: #fff; font-size: 12px; line-height: 17px; letter-spacing: -.4px; padding-right: 10px; }
```
